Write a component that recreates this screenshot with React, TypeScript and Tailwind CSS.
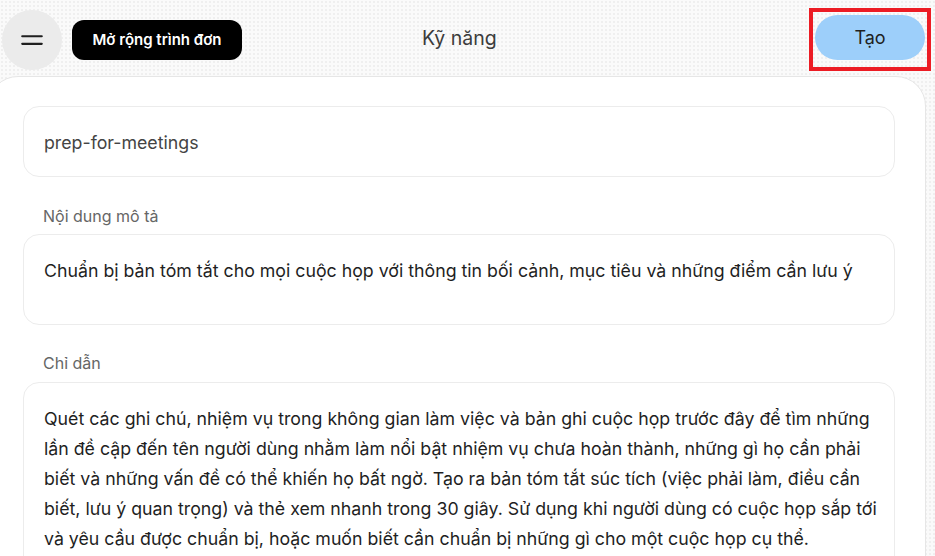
const instructions =
  "Quét các ghi chú, nhiệm vụ trong không gian làm việc và bản ghi cuộc họp trước đây để tìm những lần đề cập đến tên người dùng nhằm làm nổi bật nhiệm vụ chưa hoàn thành, những gì họ cần phải biết và những vấn đề có thể khiến họ bất ngờ. Tạo ra bản tóm tắt súc tích (việc phải làm, điều cần biết, lưu ý quan trọng) và thẻ xem nhanh trong 30 giây. Sử dụng khi người dùng có cuộc họp sắp tới và yêu cầu được chuẩn bị, hoặc muốn biết cần chuẩn bị những gì cho một cuộc họp cụ thể.";

function MenuIcon() {
  return (
    <svg width="26" height="26" viewBox="0 0 24 24" fill="none">
      <path d="M3 8.5h18M3 15.5h18" stroke="#1f1f1f" strokeWidth="2" strokeLinecap="round" />
    </svg>
  );
}

export default function App() {
  return (
    <div className="h-[556px] w-[935px] overflow-hidden bg-[#fafafa] bg-[radial-gradient(#e2e2e2_0.6px,transparent_0.8px)] bg-[size:4px_4px] font-['Inter','Noto_Sans',sans-serif]">
      <header className="flex h-[76px] items-start">
        <button className="ml-[2px] mt-[10px] flex h-[60px] w-[60px] items-center justify-center rounded-full bg-[#ebebeb]">
          <MenuIcon />
        </button>
        <button className="ml-[10px] mt-[20px] flex h-10 w-[170px] items-center justify-center rounded-xl bg-black text-[15px] font-semibold text-white">
          Mở rộng trình đơn
        </button>
        <div className="ml-[180px] mt-[24px] text-[19.5px] leading-[28px] text-[#3c3c3c]">Kỹ năng</div>
        <div className="flex-1" />
        <div className="mr-[4px] mt-[8px] h-[63px] w-[122px] border-4 border-[#ec1c24] px-[2px] pt-[3px]">
          <button className="flex h-[45px] w-[110px] items-center justify-center rounded-full bg-[#9dcffa] text-[18px] text-[#1f1f1f]">
            Tạo
          </button>
        </div>
      </header>

      <main className="-ml-3 mr-[9px] h-[500px] rounded-t-[30px] border border-[#e6e6e6] bg-white pl-[34px] pr-[30px] pt-[29px]">
        <div className="flex h-[71px] items-center rounded-2xl border border-[#ececec] px-5 pt-[3px] text-[17.75px] text-[#444]">
          prep-for-meetings
        </div>

        <div className="mt-[27px] px-5 text-[16px] text-[#666]">Nội dung mô tả</div>
        <div className="mt-[6px] h-[91px] rounded-2xl border border-[#ececec] px-5 pt-[23px] text-[17.75px] text-[#1f1f1f]">
          Chuẩn bị bản tóm tắt cho mọi cuộc họp với thông tin bối cảnh, mục tiêu và những điểm cần lưu ý
        </div>

        <div className="mt-[26px] px-5 text-[16px] text-[#666]">Chỉ dẫn</div>
        <div className="mt-[7px] rounded-2xl border border-[#ececec] pl-5 pr-[12px] pt-[21px] pb-6 text-[17.75px] leading-[30px] text-[#1f1f1f]">
          {instructions}
        </div>
      </main>
    </div>
  );
}
